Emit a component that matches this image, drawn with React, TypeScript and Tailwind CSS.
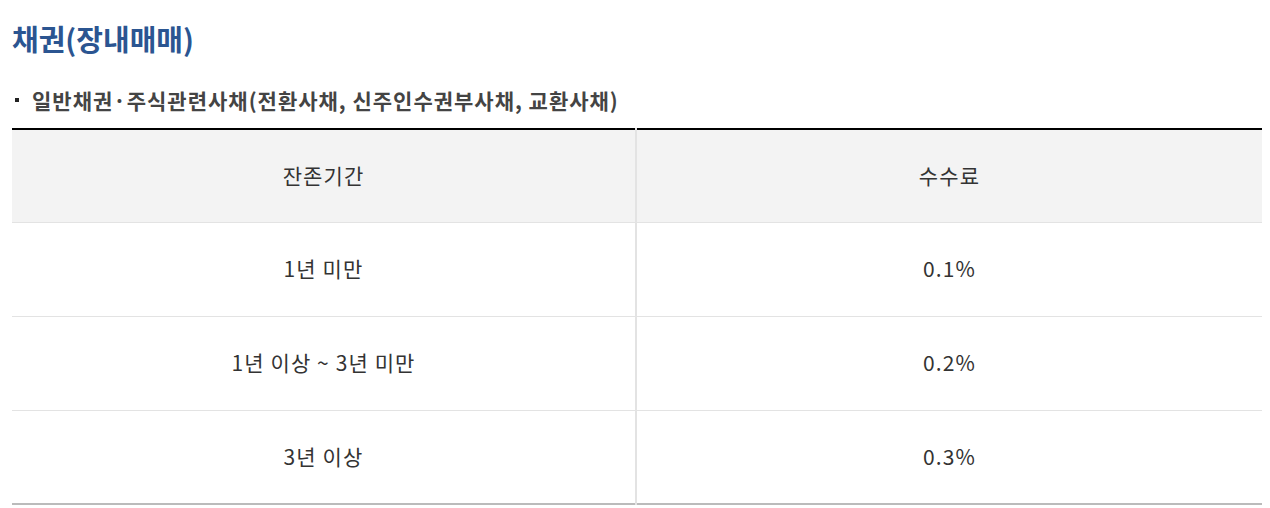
const rows = [
  { period: "1년 미만", fee: "0.1%" },
  { period: "1년 이상 ~ 3년 미만", fee: "0.2%" },
  { period: "3년 이상", fee: "0.3%" },
];

export default function App() {
  return (
    <div
      className="w-[1270px] h-[508px] bg-white px-3 pt-[18px] overflow-hidden"
      style={{ fontFamily: '"Noto Sans CJK KR", "Noto Sans", sans-serif' }}
    >
      <h2 className="text-[29px] leading-[40px] font-bold text-[#2b5591]">
        채권(장내매매)
      </h2>

      <div className="mt-[28px] flex items-center gap-[13px] pl-[3px]">
        <span className="w-[4px] h-[4px] bg-[#222]" />
        <p className="text-[21px] leading-[28px] font-bold text-[#444] tracking-[1px]">
          일반채권·주식관련사채(전환사채, 신주인수권부사채, 교환사채)
        </p>
      </div>

      <table className="mt-[14px] w-[1250px] border-collapse border-t-2 border-t-black border-b-2 border-b-[#bbbbbb] text-[21px] tracking-[1.1px] text-[#333]">
        <thead>
          <tr className="bg-[#f3f3f3] h-[93px] border-b border-[#e3e3e3]">
            <th className="w-[624px] font-normal border-r-2 border-[#e3e3e3]">잔존기간</th>
            <th className="font-normal">수수료</th>
          </tr>
        </thead>
        <tbody>
          {rows.map((r, i) => (
            <tr key={r.fee} className={`h-[94px] ${i < rows.length - 1 ? "border-b border-[#e3e3e3]" : ""}`}>
              <td className="text-center border-r-2 border-[#e3e3e3]">{r.period}</td>
              <td className="text-center">{r.fee}</td>
            </tr>
          ))}
        </tbody>
      </table>
    </div>
  );
}
